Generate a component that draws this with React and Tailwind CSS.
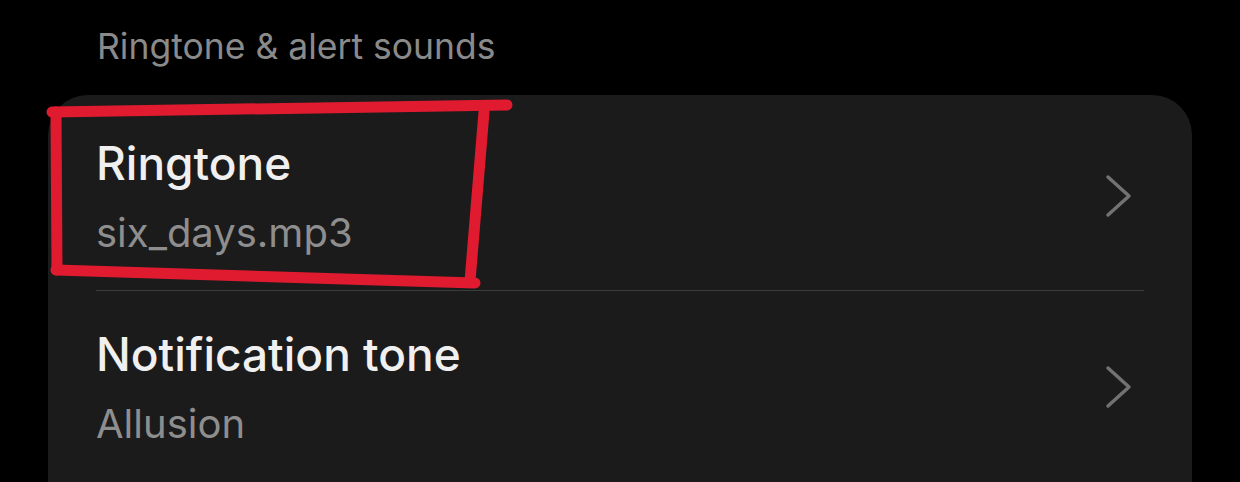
import React from "react";

function Chevron() {
  return (
    <svg width="30" height="46" viewBox="0 0 30 46" className="shrink-0 mr-[10px]">
      <path d="M4 4 L25 23 L4 42" fill="none" stroke="#727272" strokeWidth="3.5" strokeLinecap="round" strokeLinejoin="round" />
    </svg>
  );
}

function Row({ title, value, className }) {
  return (
    <div className={`flex items-center justify-between ${className}`}>
      <div className="flex flex-col">
        <div className="text-[46px] leading-[56px] font-medium text-[#f0f0f0]">{title}</div>
        <div className="mt-[18px] text-[40px] leading-[48px] text-[#8e8e8e]">{value}</div>
      </div>
      <Chevron />
    </div>
  );
}

export default function App() {
  return (
    <div
      className="relative w-[1240px] h-[482px] overflow-hidden bg-black"
      style={{ fontFamily: "Inter, 'Noto Sans', sans-serif" }}
    >
      <div className="pl-[97px] pt-[26px] text-[35.5px] leading-[42px] text-[#8a8a8a]">
        Ringtone &amp; alert sounds
      </div>
      <div className="mt-[27px] ml-[48px] w-[1144px] rounded-t-[40px] bg-[#1b1b1b] px-[48px] pb-[20px]">
        <Row title="Ringtone" value="six_days.mp3" className="pt-[40px] pb-[33px]" />
        <div className="h-px bg-[#3c3c3c]" />
        <Row title="Notification tone" value="Allusion" className="pt-[35px] pb-[40px]" />
        <div className="h-px bg-[#3c3c3c]" />
      </div>
      <svg
        className="absolute left-0 top-0 pointer-events-none"
        width="1240"
        height="482"
        viewBox="0 0 1240 482"
      >
        <g fill="none" stroke="#e01b30" strokeWidth="11" strokeLinecap="round" strokeLinejoin="round">
          <path d="M52 112 L507 105" />
          <path d="M56 112 L57 270" />
          <path d="M56 270 L475 283" />
          <path d="M484 112 L470 281" />
        </g>
      </svg>
    </div>
  );
}
